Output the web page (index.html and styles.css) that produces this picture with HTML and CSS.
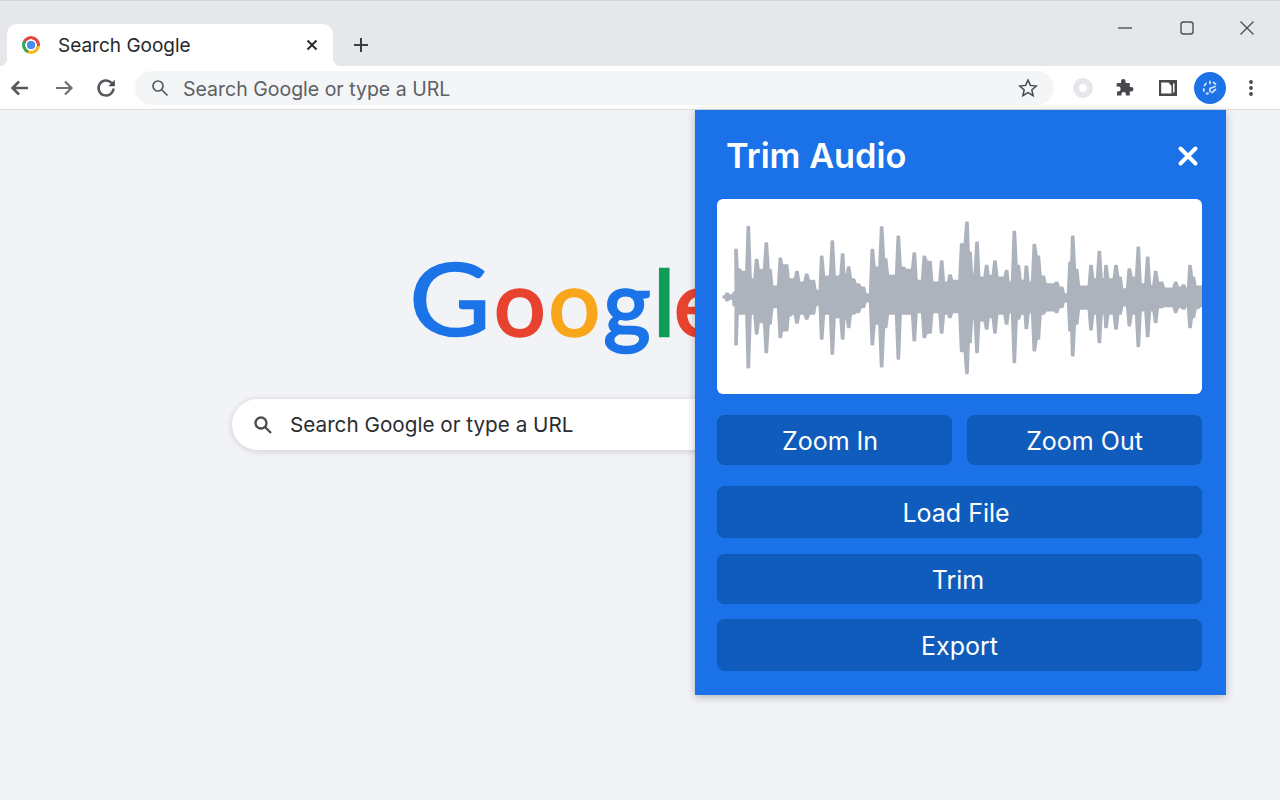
FILE: index.html
```html
<!DOCTYPE html>
<html lang="en">
<head>
  <meta charset="UTF-8">
  <meta name="viewport" content="width=device-width, initial-scale=1.0">
  <title>Search Google</title>
  <link rel="stylesheet" href="styles.css">
</head>
<body>

  <!-- Tab strip -->
  <div class="tabstrip">
    <div class="tab">
      <span class="favicon"></span>
      <span class="tab-title">Search Google</span>
      <svg class="tab-close" width="14" height="14" viewBox="0 0 14 14"><path d="M2.5 2.5l9 9M11.5 2.5l-9 9" /></svg>
    </div>
    <svg class="new-tab" width="16" height="16" viewBox="0 0 16 16"><path d="M8 1v14M1 8h14" /></svg>
    <div class="window-controls">
      <svg width="16" height="16" viewBox="0 0 16 16"><path d="M1 8h14" /></svg>
      <svg width="16" height="16" viewBox="0 0 16 16"><rect x="2" y="2" width="12" height="12" rx="2.5" /></svg>
      <svg width="16" height="16" viewBox="0 0 16 16"><path d="M1.5 1.5l13 13M14.5 1.5l-13 13" /></svg>
    </div>
  </div>

  <!-- Toolbar -->
  <div class="toolbar">
    <div class="nav-buttons">
      <svg width="24" height="24" viewBox="0 0 24 24"><path d="M20 12H5M11 5.500L4.500 12l6.500 6.500" /></svg>
      <svg class="faded" width="24" height="24" viewBox="0 0 24 24"><path d="M4 12h15M13 5.500l6.500 6.500-6.500 6.500" /></svg>
      <svg class="reload" width="24" height="24" viewBox="0 0 24 24"><path d="M19.500 12.500a7.500 7.500 0 1 1-2.200-5.800L20 9.200" /><path class="solid" d="M20.800 3.800v6.400h-6.400z" /></svg>
    </div>
    <div class="omnibox">
      <svg class="omni-search" width="18" height="18" viewBox="0 0 18 18"><circle cx="7" cy="7" r="5" /><path d="M11 11l5.500 5.500" /></svg>
      <span class="omni-text">Search Google or type a URL</span>
      <svg class="omni-star" width="20" height="20" viewBox="0 0 20 20"><path d="M10 2l2.400 5.400 5.800.6-4.400 3.900 1.300 5.700-5.100-3-5.100 3 1.300-5.700L1.800 8l5.800-.6z" /></svg>
    </div>
    <div class="toolbar-actions">
      <span class="ext-dot"></span>
      <svg class="ext-icon puzzle" width="20" height="20" viewBox="0 0 20 20"><path class="solid" d="M7 3.200a2.300 2.300 0 0 1 4.600 0V5h4.200v4h1.400a2.300 2.300 0 0 1 0 4.600h-1.400v3.800h-3.900v-1.300a2.200 2.200 0 0 0-4.400 0v1.300H3v-4h1.300a2.400 2.400 0 0 0 0-4.800H2.400L3 5h4z" /></svg>
      <svg class="ext-icon" width="20" height="20" viewBox="0 0 20 20"><path class="solid" fill-rule="evenodd" d="M1 2h18v16H1zM3.200 4.500v11h10.300V8l-3-3.500zM15 5.500v9h1.500v-9z" /></svg>
      <span class="avatar">
        <svg width="20" height="20" viewBox="0 0 20 20"><path d="M10 3.500v2M6 5.500l-1.500 2M3.800 11v2M6.500 15.500h1.500M10 10.500l5-2M12 14.500l3.500-3M15.500 6l-2-1.500M10 10.500v3" /></svg>
      </span>
      <svg class="kebab" width="6" height="18" viewBox="0 0 6 18"><circle cx="3" cy="3" r="1.900" /><circle cx="3" cy="9" r="1.900" /><circle cx="3" cy="15" r="1.900" /></svg>
    </div>
  </div>

  <!-- New tab page -->
  <div class="page">
    <div class="logo"><span class="letter-cap blue">G</span><span class="red">o</span><span class="yellow">o</span><span class="blue">g</span><span class="green">l</span><span class="letter-e red">e</span></div>
    <div class="searchbox">
      <svg width="20" height="20" viewBox="0 0 20 20"><circle cx="8" cy="8" r="5.500" /><path d="M12 12l6 6" /></svg>
      <span>Search Google or type a URL</span>
    </div>

    <!-- Extension popup -->
    <div class="popup">
      <div class="popup-header">
        <h1>Trim Audio</h1>
        <svg width="22" height="22" viewBox="0 0 22 22"><path d="M3.500 3.500l15 15M18.500 3.500l-15 15" /></svg>
      </div>
      <div class="waveform">
        <svg viewBox="0 0 1455 585" width="485" height="195"><path id="wavePath" /></svg>
      </div>
      <div class="zoom-row">
        <button class="popup-button zoom-in">Zoom In</button>
        <button class="popup-button zoom-out">Zoom Out</button>
      </div>
      <button class="popup-button load">Load File</button>
      <button class="popup-button trim">Trim</button>
      <button class="popup-button export">Export</button>
    </div>
  </div>

  <script src="waveform.js"></script>
</body>
</html>
```

FILE: styles.css
```css
body {
  margin: 0;
  padding: 0;
  height: 800px;
  overflow: hidden;
  display: flex;
  flex-direction: column;
  font-family: Inter, "Liberation Sans", sans-serif;
  background-color: #f2f3f7;
}

svg {
  fill: none;
  stroke: #55585d;
  stroke-width: 2;
  display: block;
}

.solid {
  fill: #47494d;
  stroke: none;
}

/* Tab strip */
.tabstrip {
  height: 66px;
  flex-shrink: 0;
  box-sizing: border-box;
  padding: 23px 0 0 7px;
  display: flex;
  align-items: flex-start;
  background-color: #e6e7eb;
  border-top: 1px solid #d4d5d9;
}

.tab {
  width: 326px;
  height: 42px;
  box-sizing: border-box;
  padding: 0 14px 0 15px;
  display: flex;
  align-items: center;
  background-color: white;
  border-radius: 10px 10px 0 0;
  position: relative;
}

/* Small curved feet at the bottom of the tab */
.tab::before,
.tab::after {
  content: '';
  position: absolute;
  bottom: 0;
  width: 8px;
  height: 8px;
}

.tab::before {
  left: -8px;
  background: radial-gradient(circle at 0 0, #e6e7eb 8px, white 8.500px);
}

.tab::after {
  right: -8px;
  background: radial-gradient(circle at 100% 0, #e6e7eb 8px, white 8.500px);
}

.favicon {
  width: 18px;
  height: 18px;
  border-radius: 50%;
  flex-shrink: 0;
  background:
    radial-gradient(circle, #4a8df0 0 4px, white 4.500px 5.500px, transparent 6px),
    conic-gradient(#e8453c 0 95deg, #f5b921 95deg 205deg, #34a853 205deg 300deg, #e8453c 300deg);
}

.tab-title {
  margin-left: 18px;
  flex: 1;
  font-size: 19px;
  color: #26282b;
}

.tab-close {
  stroke: #2a2c2f;
  stroke-width: 2;
}

.new-tab {
  margin: 13px 0 0 20px;
  stroke: #3a3c40;
}

.window-controls {
  margin-left: auto;
  margin-top: -4px;
  margin-right: 25px;
  display: flex;
  gap: 46px;
}

.window-controls svg {
  stroke: #4d4f53;
  stroke-width: 1.400;
}

.window-controls svg:last-child {
  margin-left: -2px;
}

/* Toolbar */
.toolbar {
  height: 44px;
  flex-shrink: 0;
  box-sizing: border-box;
  padding-left: 8px;
  display: flex;
  align-items: center;
  background-color: white;
  border-bottom: 1px solid #dcdde0;
}

.nav-buttons {
  display: flex;
  gap: 20px;
}

.nav-buttons svg {
  stroke: #55585d;
  stroke-width: 2.500;
}

.nav-buttons .faded {
  stroke: #6d6f73;
  stroke-width: 2.200;
}

.nav-buttons .reload {
  margin-left: -2px;
}

.omnibox {
  width: 919px;
  height: 34px;
  margin-left: 17px;
  box-sizing: border-box;
  padding: 0 16px;
  display: flex;
  align-items: center;
  background-color: #f4f5f7;
  border-radius: 17px;
}

.omni-search {
  stroke-width: 1.700;
}

.omni-text {
  margin-left: 14px;
  padding-top: 2px;
  flex: 1;
  font-size: 19.500px;
  color: #5c5f64;
}

.omni-star {
  stroke: #46484c;
  stroke-width: 1.500;
}

.toolbar-actions {
  margin-left: 19px;
  display: flex;
  align-items: center;
}

.ext-dot {
  width: 8px;
  height: 8px;
  border: 6px solid #e6e7ea;
  border-radius: 50%;
}

.ext-icon {
  margin-left: 24px;
}

.ext-icon.puzzle {
  margin-left: 21px;
}

.avatar {
  width: 32px;
  height: 32px;
  margin-left: 16px;
  display: flex;
  align-items: center;
  justify-content: center;
  background-color: #1c72e6;
  border-radius: 50%;
}

.avatar svg {
  stroke: #cfe2fb;
  stroke-width: 1.800;
  stroke-linecap: round;
}

.kebab {
  margin-left: 22px;
  fill: #47494d;
  stroke: none;
}

/* New tab page */
.page {
  flex: 1;
  position: relative;
}

.logo {
  margin: 124px 0 0 409px;
  height: 126px;
  display: flex;
  align-items: baseline;
  gap: 3px;
  font-family: Lato, sans-serif;
  font-size: 91px;
  line-height: 126px;
  -webkit-text-stroke: 2.500px currentColor;
}

.letter-cap {
  width: 82px;
  font-size: 100px;
  -webkit-text-stroke: 1.500px currentColor;
  transform: scaleX(1.120);
  transform-origin: left;
}

.letter-e {
  margin-left: -4px;
}

.blue { color: #1b73e8; }
.red { color: #e8432f; }
.yellow { color: #f9a61a; }
.green { color: #0f9d58; }

.searchbox {
  width: 600px;
  height: 51px;
  margin: 39px 0 0 232px;
  box-sizing: border-box;
  padding-left: 21px;
  display: flex;
  align-items: center;
  background-color: white;
  border-radius: 26px;
  box-shadow: 0 1px 6px rgba(32, 33, 36, 0.18);
  font-size: 20.700px;
  color: #2b2d30;
}

.searchbox svg {
  stroke: #4d4f53;
  stroke-width: 2.400;
  margin-right: 17px;
}

/* Popup sits over the page */
.popup {
  position: absolute;
  top: 0;
  right: 54px;
  width: 531px;
  height: 585px;
  box-sizing: border-box;
  padding: 0 24px 0 22px;
  background-color: #1b72e8;
  box-shadow: 0 2px 8px rgba(32, 33, 36, 0.3);
}

.popup-header {
  height: 89px;
  display: flex;
  align-items: center;
  justify-content: space-between;
  padding: 2px 3px 0 9px;
  box-sizing: border-box;
}

.popup-header h1 {
  margin: 0;
  font-size: 34.300px;
  font-weight: 600;
  color: white;
}

.popup-header svg {
  stroke: white;
  stroke-width: 4;
  stroke-linecap: round;
}

.waveform {
  height: 195px;
  background-color: white;
  border-radius: 6px;
  overflow: hidden;
}

#wavePath {
  fill: #adb3bd;
  stroke: #adb3bd;
  stroke-width: 5;
  stroke-linejoin: round;
}

.zoom-row {
  margin-top: 21px;
  display: flex;
  gap: 15px;
}

.popup-button {
  display: block;
  width: 100%;
  padding: 2px 0 0;
  border: none;
  border-radius: 8px;
  background-color: #0f5cbc;
  font-family: inherit;
  font-size: 25px;
  color: white;
  box-shadow: inset 0 0 0 1px rgba(10, 70, 160, 0.15);
}

.zoom-in, .zoom-out { width: 235px; height: 50px; }
.zoom-in { padding-right: 9px; }
.load { height: 52px; margin-top: 21px; padding-right: 7px; }
.trim { height: 50px; margin-top: 16px; padding-right: 3px; }
.export { height: 52px; margin-top: 15px; }
```

FILE: waveform.js
```js
// Peaks as [x, top, bottom], in the svg's viewBox units
const peaks = [
  [22,291,296],[30,283,305],[44,288,300],[52,280,320],[57,152,437],[66,210,345],[84,218,345],[94,83,506],
  [106,240,345],[119,182,405],[129,212,370],[148,132,460],[159,212,375],[179,262,325],[190,178,415],[199,198,395],
  [209,198,395],[219,240,350],[229,240,345],[240,218,372],[252,250,345],[269,226,360],[289,245,345],[304,275,318],
  [314,172,420],[329,232,345],[346,126,465],[359,232,355],[377,165,420],[386,225,360],[395,204,385],[409,240,345],
  [424,255,340],[439,265,325],[452,285,308],[466,152,437],[479,205,375],[494,84,503],[506,180,385],[519,230,345],
  [544,112,480],[559,205,345],[574,212,345],[592,162,425],[606,245,340],[622,172,415],[639,188,402],[654,250,340],
  [674,186,402],[689,250,345],[699,228,355],[719,245,340],[734,135,457],[750,70,523],[759,160,430],[769,225,360],
  [780,130,460],[792,235,365],[809,200,390],[819,230,355],[834,186,402],[849,235,345],[869,215,375],[879,250,340],
  [892,98,490],[904,200,360],[919,245,345],[928,202,388],[939,250,340],[952,137,455],[964,172,420],[979,232,345],
  [999,255,335],[1019,250,340],[1034,265,325],[1049,285,308],[1059,190,395],[1067,112,470],[1079,212,375],[1106,262,330],
  [1122,200,392],[1134,240,345],[1147,158,430],[1159,240,345],[1167,200,385],[1179,240,345],[1197,200,390],[1209,235,345],
  [1224,270,320],[1237,210,380],[1249,235,345],[1264,145,442],[1279,255,335],[1292,175,412],[1304,260,335],[1316,218,370],
  [1334,250,325],[1354,268,322],[1376,250,340],[1389,265,325],[1400,258,330],[1409,268,322],[1419,200,385],[1429,235,355],
  [1442,262,328],[1460,262,322]
];

// Walk one edge of the wave. Spikes get a small flat top and steep sides,
// dropping to the level of the neighbouring peak just beside them.
function edgePoints(valueAt, isHigher) {
  const halfWidth = 3;
  const shoulder = 8;
  const points = [];
  peaks.forEach((p, i) => {
    const y = valueAt(p);
    const prev = peaks[i - 1];
    const next = peaks[i + 1];
    if (prev && isHigher(y, valueAt(prev)) && p[0] - prev[0] > shoulder + halfWidth) {
      points.push([p[0] - shoulder, valueAt(prev)]);
    }
    points.push([p[0] - halfWidth, y], [p[0] + halfWidth, y]);
    if (next && isHigher(y, valueAt(next)) && next[0] - p[0] > shoulder + halfWidth) {
      points.push([p[0] + shoulder, valueAt(next)]);
    }
  });
  return points;
}

function buildWavePath() {
  const top = edgePoints(p => p[1], (a, b) => a < b);
  const bottom = edgePoints(p => p[2], (a, b) => a > b).reverse();
  return 'M' + top.concat(bottom).map(pt => pt.join(' ')).join(' L') + ' Z';
}

document.getElementById('wavePath').setAttribute('d', buildWavePath());
```
